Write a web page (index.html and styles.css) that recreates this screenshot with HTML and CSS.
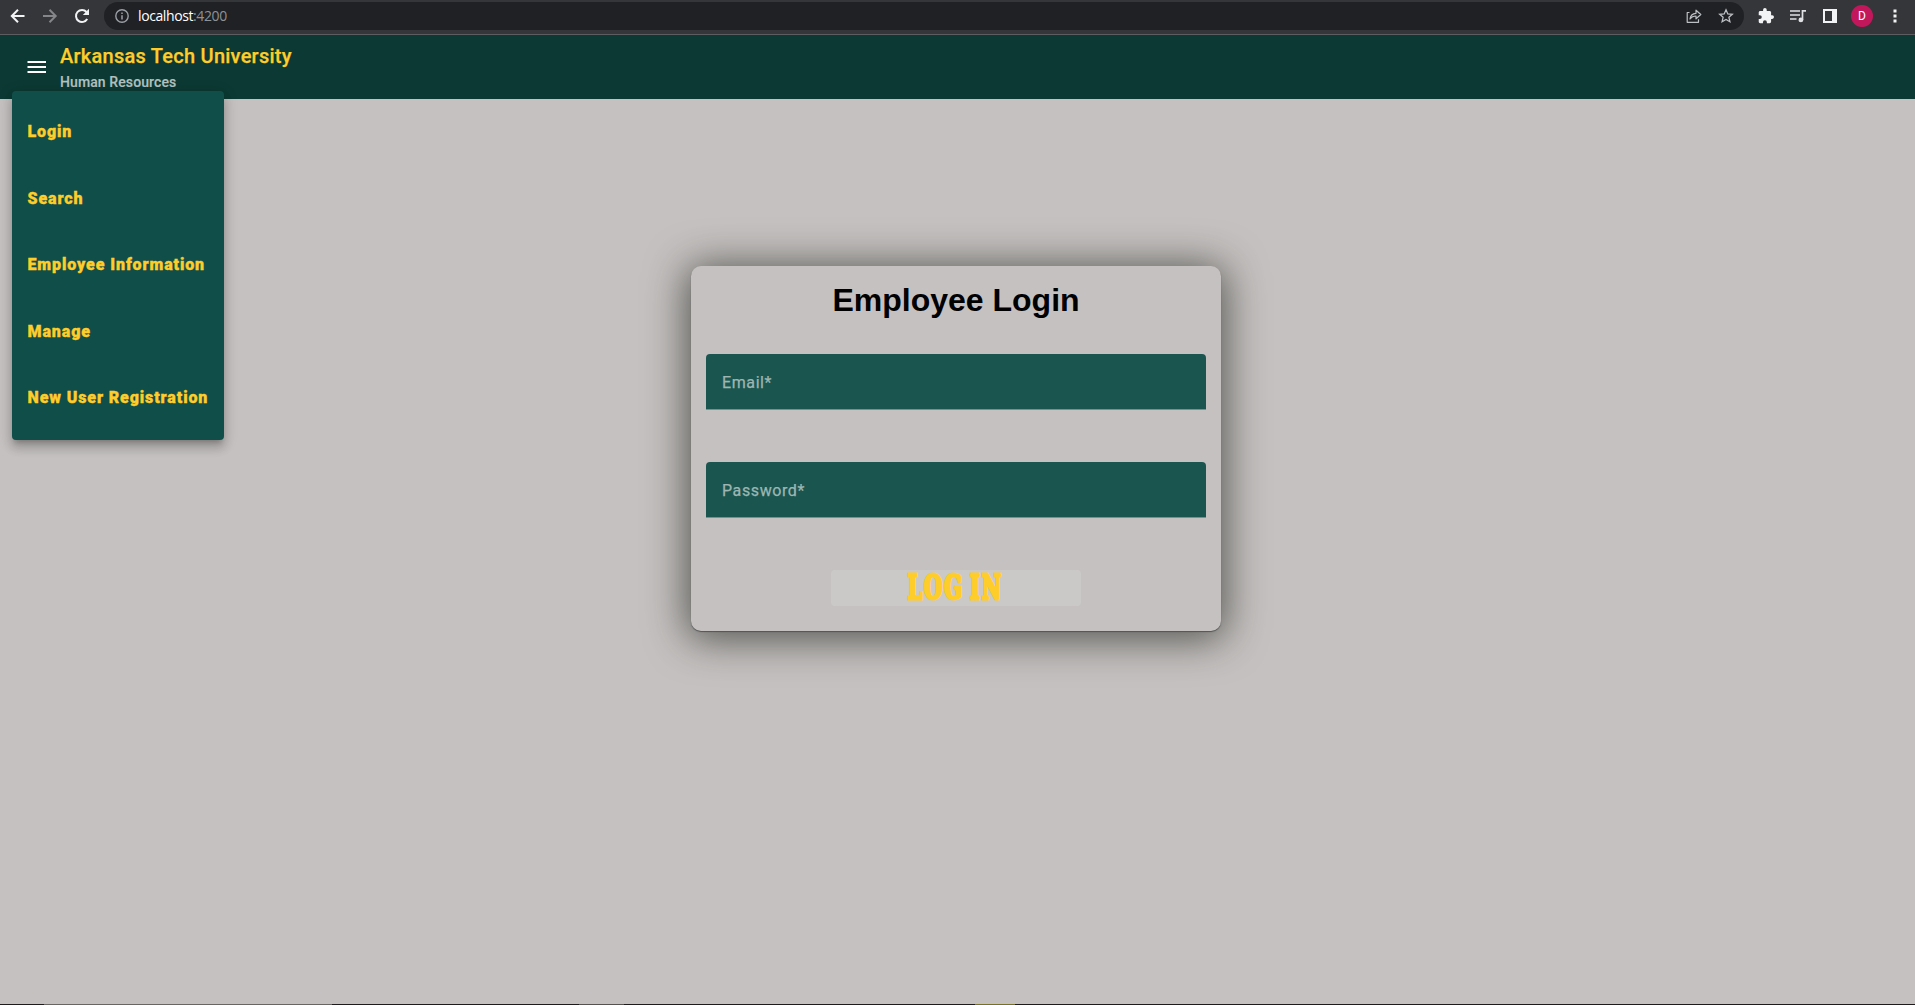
FILE: index.html
```html
<!DOCTYPE html>
<html lang="en">
<head>
<meta charset="utf-8">
<title>Human Resources</title>
<link rel="stylesheet" href="styles.css">
</head>
<body>
<div class="browser">
  <svg class="ic back" viewBox="0 0 16 16"><path d="M14.5 8H2M8 1.8 1.8 8 8 14.200" fill="none" stroke="#f1f3f4" stroke-width="2"/></svg>
  <svg class="ic fwd" viewBox="0 0 16 16"><path d="M1 8h12.500M7.500 1.800 13.700 8l-6.200 6.200" fill="none" stroke="#85868a" stroke-width="2"/></svg>
  <svg class="ic reload" viewBox="0 0 16 16"><path d="M13.200 11A6 6 0 1 1 12.500 4" fill="none" stroke="#f1f3f4" stroke-width="2"/><path d="M15 .8V7H8.800z" fill="#f1f3f4"/></svg>
  <div class="address">
    <svg class="info" viewBox="0 0 14 14"><circle cx="7" cy="7" r="6.200" fill="none" stroke="#9aa0a6" stroke-width="1.400"/><path d="M7 6.200v4.200M7 3.500v1.500" stroke="#9aa0a6" stroke-width="1.500"/></svg>
    <span class="host">localhost</span><span class="port">:4200</span>
    <svg class="share" viewBox="0 0 16 16"><path d="M3.500 4.500H1.200v9.800h11.300v-3M4 11c.4-3.700 2.600-5.500 6-5.700V2.200L14.800 6.500 10 10.800V8C7.500 8 5.500 8.800 4 11z" fill="none" stroke="#bdc1c6" stroke-width="1.200" stroke-linejoin="round"/></svg>
    <svg class="star" viewBox="0 0 16 16"><path d="m8 1.800 1.800 4.100 4.500.4-3.400 3 1 4.400L8 11.400l-3.900 2.300 1-4.400-3.400-3 4.500-.4z" fill="none" stroke="#bdc1c6" stroke-width="1.300"/></svg>
  </div>
  <svg class="ic ext" viewBox="1 1 22 22"><path fill="#f1f3f4" d="M20.500 11H19V7c0-1.100-.9-2-2-2h-4V3.500a2.500 2.500 0 0 0-5 0V5H4c-1.100 0-2 .9-2 2v3.800h1.500a2.700 2.700 0 0 1 0 5.400H2V20c0 1.100.9 2 2 2h3.800v-1.500a2.700 2.700 0 0 1 5.400 0V22H17c1.100 0 2-.9 2-2v-4h1.500a2.500 2.500 0 0 0 0-5z"/></svg>
  <svg class="ic media" viewBox="0 0 16 14"><path d="M0 2h10M0 6h10M0 10h6.500M12.500 11V1.800H16" fill="none" stroke="#dfe1e5" stroke-width="1.700"/><circle cx="10.900" cy="10.900" r="2.400" fill="#dfe1e5"/></svg>
  <svg class="ic panel" viewBox="0 0 14 14"><path fill="#f1f3f4" fill-rule="evenodd" d="M0 0h14v14H0zM2 2v10h7V2z"/></svg>
  <span class="avatar">D</span>
  <svg class="ic dots" viewBox="0 0 4 14"><path fill="#f1f3f4" d="M.5.500h3v3h-3zM.5 5.500h3v3h-3zM.5 10.500h3v3h-3z"/></svg>
</div>
<header class="toolbar">
  <svg class="burger" viewBox="0 0 19 12"><path fill="#fff" d="M.5 0H19v2H.5zM.5 5H19v2H.5zM.5 10H19v2H.5z"/></svg>
  <div class="titles"><h1 class="title">Arkansas Tech University</h1><div class="subtitle">Human Resources</div></div>
  <nav class="menu">
    <a class="item">Login</a><a class="item">Search</a><a class="item">Employee Information</a><a class="item">Manage</a><a class="item">New User Registration</a>
  </nav>
</header>
<main class="page">
  <form class="card">
    <h2 class="heading">Employee Login</h2>
    <div class="field">Email*</div>
    <div class="field">Password*</div>
    <div class="login"><span class="login-text">LOG IN</span></div>
  </form>
</main>
<footer class="edge"><i class="seg a"></i><i class="seg b"></i><i class="seg c"></i></footer>
</body>
</html>
```
FILE: styles.css
```css
* { box-sizing: border-box; }
body { margin: 0; height: 1005px; overflow: hidden; display: flex; flex-direction: column; background: #c5c1c0; font-family: Roboto, sans-serif; }
.browser { height: 35px; flex: none; display: flex; align-items: center; padding: 0 0 3px 10px; background: #35363a; border-bottom: 1px solid #5b5d60; }
.ic { flex: none; display: block; }
.back, .fwd, .reload { width: 16px; height: 16px; margin-right: 16px; }
.reload { margin-right: 14px; }
.address { width: 1640px; height: 28px; border-radius: 14px; background: #202124; display: flex; align-items: center; padding: 0 10px 0 11px; font: 14px "Open Sans", sans-serif; letter-spacing: -.4px; }
.info { width: 14px; height: 14px; margin-right: 9px; }
.host { color: #fff; }
.port { color: #8f9296; }
.share { width: 16px; height: 16px; margin-left: auto; margin-right: 16px; }
.star { width: 16px; height: 16px; }
.ext { width: 16px; height: 16px; margin-left: 14px; }
.media { width: 16px; height: 14px; margin-left: 16px; }
.panel { width: 14px; height: 14px; margin-left: 17px; }
.avatar { width: 22px; height: 22px; border-radius: 50%; margin-left: 14px; background: #c2185b; color: #fff; font-size: 12px; line-height: 22px; text-align: center; }
.dots { width: 4px; height: 14px; margin-left: 20px; }
.toolbar { position: relative; height: 64px; flex: none; background: #0c3933; display: flex; padding-left: 27px; }
.burger { width: 19px; height: 12px; margin: 26px 14px 0 0; }
.titles { padding-top: 8px; }
.title { margin: 0; font-size: 20px; font-weight: 500; line-height: 26px; letter-spacing: .25px; color: #ffcd2a; -webkit-text-stroke: .25px #ffcd2a; }
.subtitle { font-size: 14px; font-weight: 500; line-height: 26px; letter-spacing: .1px; color: #b3c2c0; -webkit-text-stroke: .15px #b3c2c0; }
.menu { position: absolute; z-index: 2; left: 12px; top: 56px; width: 212px; height: 349px; padding: 8px 16px 8px 15.500px; border-radius: 4px; background: #104f49; box-shadow: 0 5px 5px -3px rgba(0,0,0,.2), 0 8px 10px 1px rgba(0,0,0,.14), 0 3px 14px 2px rgba(0,0,0,.12); }
.item { display: block; height: 66.500px; line-height: 66.500px; font-size: 16px; font-weight: 900; letter-spacing: .9px; color: #ffcd2a; white-space: nowrap; -webkit-text-stroke: .35px #ffcd2a; }
.page { flex: 1; padding: 167px 3px 0 0; }
.card { width: 530px; height: 365px; margin: 0 auto; padding: 15px; border-radius: 10px; display: flex; flex-direction: column; align-items: center; background: #c5c1c0; box-shadow: 0 1px 1px #555, 0 4px 40px 4px rgba(24,28,20,.66); }
.heading { margin: 0 0 35px; font: bold 32px/38px "Liberation Sans", Arial, sans-serif; color: #000; }
.field { width: 500px; height: 56px; flex: none; margin-bottom: 52px; padding-left: 16px; border-radius: 4px 4px 0 0; border-bottom: 1px solid #70938e; background: #1a564f; color: #9db6b3; font-size: 16px; line-height: 58px; letter-spacing: .6px; -webkit-text-stroke: .25px #9db6b3; }
.login { width: 250px; height: 36px; border-radius: 4px; background: #cbc9c7; display: flex; align-items: center; justify-content: center; }
.login-text { font: bold 33px/33px "DejaVu Serif", serif; letter-spacing: 3px; word-spacing: -5px; color: #ffcd2a; transform: translate(-1px, -1px) scaleX(.635); white-space: nowrap; -webkit-text-stroke: 2.800px #ffcd2a; text-shadow: 1.500px 0 #ffcd2a, -1.500px 0 #ffcd2a; }
.edge { height: 1px; flex: none; background: #1e1a1b; display: flex; }
.seg { height: 1px; }
.a { width: 288px; margin-left: 44px; background: #686562; }
.b { width: 45px; margin-left: 247px; background: #55524f; }
.c { width: 40px; margin-left: 351px; background: #777026; }
```
